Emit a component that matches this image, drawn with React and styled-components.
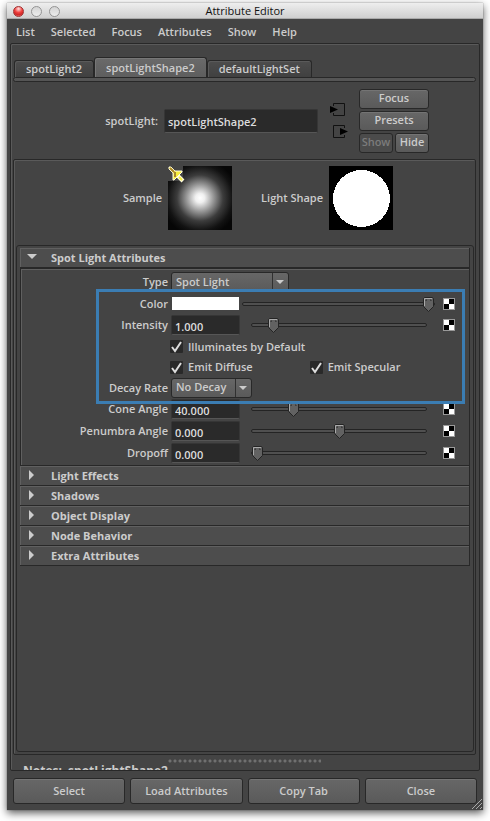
import React from "react";
import styled, { createGlobalStyle } from "styled-components";

const GlobalStyle = createGlobalStyle`
  * { box-sizing: border-box; }
  body {
    margin: 0;
    background: #fff;
    color: #ccc;
    font: 600 11px/16px "Open Sans", "Noto Sans", sans-serif;
  }
  button, input, select { font: inherit; color: inherit; margin: 0; }
  button { cursor: default; white-space: nowrap; }
`;

const svgUrl = (svg) => `url("data:image/svg+xml,${encodeURIComponent(svg)}")`;

const thumbImage = svgUrl(
  `<svg xmlns="http://www.w3.org/2000/svg" width="11" height="15"><path d="M1.5.5h8l1 1v8L5.5 14.5.5 9.500v-8z" fill="#626262" stroke="#242424"/><path d="M1.500 9V1.500H9" fill="none" stroke="#aaa"/><path d="M3 4V3h1M7 3h1v1" fill="none" stroke="#333"/></svg>`
);
const arrowImage = svgUrl(
  `<svg xmlns="http://www.w3.org/2000/svg" width="8" height="4"><path d="M0 0h8L4 4z" fill="#ccc"/></svg>`
);
const checkImage = svgUrl(
  `<svg xmlns="http://www.w3.org/2000/svg" width="13" height="13"><path d="M2 7l3 4 6-9" fill="none" stroke="#ddd" stroke-width="2"/></svg>`
);

const Page = styled.div`
  display: flex;
  min-height: 100vh;
  padding: 3px 7px 11px;
`;

const Window = styled.main`
  flex: 1;
  min-width: 0;
  display: flex;
  flex-direction: column;
  position: relative;
  background: #444;
  box-shadow: 0 3px 8px rgba(0, 0, 0, 0.65), 0 0 1px #888;
`;

const TitleBar = styled.header`
  display: grid;
  grid-template-columns: 1fr auto 1fr;
  align-items: center;
  height: 16px;
  padding: 0 6px;
  background: linear-gradient(#eee, #cfcfcf);
  border-bottom: 1px solid #aaa;
  color: #111;
  font-weight: 500;
`;

const Title = styled.h1`
  margin: 0;
  font: inherit;
`;

const Lights = styled.div`
  display: flex;
  gap: 7px;
`;

const LightButton = styled.button`
  width: 11px;
  height: 11px;
  padding: 0;
  border-radius: 50%;
  border: 1px solid ${(p) => (p.$red ? "#a03030" : "#949494")};
  background: ${(p) =>
    p.$red
      ? "radial-gradient(circle at 50% 20%, #ffd0d0 5%, #f0423f 45%, #d02828 70%, #ff8a80)"
      : "linear-gradient(#d4d4d4, #ececec)"};
`;

const MenuBar = styled.nav`
  display: flex;
  gap: 16px;
  height: 24px;
  padding: 5px 9px 0;
`;

const MenuButton = styled.button`
  padding: 0;
  height: 16px;
  border: 0;
  background: none;
`;

const OuterFrame = styled.div`
  flex: 1;
  display: flex;
  flex-direction: column;
  margin: 0 3px 0 3px;
  padding: 13px 3px 0 2px;
  border: 1px solid #282828;
  border-radius: 2px;
  box-shadow: inset 1px 1px #5a5a5a;
`;

const TabList = styled.div`
  display: flex;
  align-items: flex-end;
  padding-left: 1px;
`;

const Tab = styled.button`
  height: ${(p) => (p.$active ? 20 : 17)}px;
  padding: 0 11px;
  line-height: 16px;
  border: 1px solid #282828;
  border-bottom: 0;
  border-radius: 3px 3px 0 0;
  background: ${(p) => (p.$active ? "linear-gradient(#6a6a6a, #5e5e5e)" : "linear-gradient(#4d4d4d, #404040)")};
  box-shadow: inset 1px 1px ${(p) => (p.$active ? "#777" : "#5a5a5a")};
`;

const TabStrip = styled.div`
  height: 5px;
  border: 1px solid #282828;
  border-radius: 3px;
  background: #555;
`;

const NodeHeader = styled.section`
  display: flex;
  align-items: center;
  height: 77px;
  padding-right: 47px;
`;

const NodeName = styled.label`
  flex: 1;
  display: flex;
  align-items: center;
  justify-content: flex-end;
  gap: 6px;
  white-space: nowrap;
`;

const Field = styled.input`
  width: ${(p) => p.$width || 69}px;
  height: ${(p) => p.$height || 20}px;
  padding: 2px 3px 0;
  border: 1px solid #363636;
  border-bottom-color: #565656;
  border-radius: 2px;
  background: #2a2a2a;
  color: #ddd;
`;

const Connections = styled.div`
  display: flex;
  flex-direction: column;
  gap: 6px;
  width: 20px;
  margin: 0 10px 0 11px;
`;

const IconButton = styled.button`
  display: block;
  height: 16px;
  padding: 0;
  border: 0;
  background: none;
`;

const NodeButtons = styled.div`
  display: grid;
  grid-template-columns: 1fr 1fr;
  gap: 2px;
  width: 70px;
`;

const PushButton = styled.button`
  grid-column: ${(p) => (p.$wide ? "1 / -1" : "auto")};
  height: ${(p) => (p.$tall ? 26 : 20)}px;
  padding: 0 0 ${(p) => (p.$tall ? 0 : 1)}px;
  border: 1px solid #282828;
  border-radius: 3px;
  background: linear-gradient(#676767, #5a5a5a);
  box-shadow: inset 0 1px #747474;
  &:disabled {
    background: #4b4b4b;
    box-shadow: none;
    color: #7c7c7c;
  }
`;

const InnerFrame = styled.div`
  flex: 1;
  display: flex;
  flex-direction: column;
  padding: 0 1px 2px 2px;
  border: 1px solid #282828;
  border-radius: 2px;
  box-shadow: inset 1px 1px #5a5a5a;
`;

const Previews = styled.section`
  display: flex;
  justify-content: center;
  gap: 29px;
  height: 85px;
  padding: 6px 0 0 26px;
`;

const Preview = styled.figure`
  display: flex;
  align-items: center;
  gap: 6px;
  height: 64px;
  margin: 0;
`;

const Swatch = styled.svg`
  display: block;
  width: 64px;
  height: 64px;
`;

const AttributeFrame = styled.div`
  flex: 1;
  padding: 2px 3px;
  border: 1px solid #282828;
  border-radius: 3px;
`;

const SectionButton = styled.button`
  display: flex;
  align-items: center;
  gap: 14px;
  width: 100%;
  height: ${(p) => (p.$open ? 21 : 20)}px;
  padding: 0 0 0 ${(p) => (p.$open ? 7 : 8)}px;
  border: 0;
  border-right: 1px solid #282828;
  border-bottom: ${(p) => (p.$open ? 2 : 1)}px solid #282828;
  background: #4d4d4d;
  box-shadow: inset 1px 1px #606060;
  font-weight: 700;
  text-align: left;
`;

const SectionBody = styled.div`
  position: relative;
  display: grid;
  grid-template-rows: 22px 21px 22px 21px 20px 21px 22px 22px 22px;
  padding: 2px 14px 1px 0;
  border: solid #282828;
  border-width: 0 1px 1px;
  box-shadow: inset 1px 1px #606060;
`;

const Row = styled.div`
  display: flex;
  align-items: center;
  min-width: 0;
`;

const RowLabel = styled.label`
  flex: none;
  width: 147px;
  margin-right: 3px;
  text-align: right;
`;

const ColorWell = styled.button`
  flex: none;
  width: 67px;
  height: 13px;
  margin: 0 3px 0 1px;
  padding: 0;
  border: 0;
  background: #fff;
`;

const Slider = styled.input`
  appearance: none;
  flex: 1;
  min-width: 0;
  height: 15px;
  margin-left: ${(p) => (p.$long ? 0 : 11)}px;
  margin-right: ${(p) => (p.$long ? 8 : 16)}px;
  background: none;
  &::-webkit-slider-runnable-track {
    height: 4px;
    border: 1px solid #242424;
    border-radius: 2px;
    background: #505050;
  }
  &::-webkit-slider-thumb {
    appearance: none;
    width: 11px;
    height: 15px;
    margin-top: -6px;
    background: ${thumbImage} no-repeat;
  }
`;

const Select = styled.select`
  appearance: none;
  width: ${(p) => p.$width}px;
  height: 20px;
  padding: 0 20px 1px 4px;
  border: 1px solid #282828;
  border-radius: 3px;
  background:
    ${arrowImage} right 4px center no-repeat,
    linear-gradient(#303030, #303030) right 15px top / 1px 100% no-repeat,
    linear-gradient(#676767, #5a5a5a);
`;

const CheckLabel = styled.label`
  display: flex;
  align-items: center;
  gap: 5px;
  width: ${(p) => p.$width || "auto"};
`;

const CheckRow = styled(Row)`
  padding-left: 149px;
`;

const CheckBox = styled.input`
  appearance: none;
  width: 13px;
  height: 13px;
  border-radius: 1px;
  background: #292929;
  &:checked { background: ${checkImage} #292929; }
`;

const Highlight = styled.div`
  position: absolute;
  inset: 20px 4px 61px 75px;
  border: 3px solid #3b7db3;
  pointer-events: none;
`;

const Notes = styled.footer`
  display: flex;
  flex-direction: column;
  height: 15px;
  padding-top: 4px;
`;

const Splitter = styled.div`
  flex: none;
  align-self: center;
  width: 153px;
  height: 4px;
  background: radial-gradient(circle at 2px 2px, #707070 1px, transparent 2px) 0 0 / 5px 4px;
`;

const NotesText = styled.div`
  height: 6px;
  margin-top: 1px;
  padding-left: 10px;
  overflow: hidden;
  line-height: 13px;
  font-weight: 700;
  font-size: 12px;
  white-space: pre;
`;

const ActionBar = styled.div`
  display: grid;
  grid-template-columns: repeat(4, 1fr);
  gap: 5px;
  padding: 7px 6px 6px;
`;

const ResizeGrip = styled.svg`
  position: absolute;
  right: 1px;
  bottom: 1px;
  width: 10px;
  height: 10px;
`;

function Checker({ label }) {
  return (
    <IconButton aria-label={label}>
      <svg width="12" height="16" viewBox="0 -2 12 16" display="block">
        <path d="M0 0h12v12H0z" fill="#999" />
        <path d="M1 1h10v10H1z" fill="#fff" />
        <path d="M6 1h5v5H6zM1 6h5v5H1z" fill="#000" />
      </svg>
    </IconButton>
  );
}

function NumberRow({ id, label, value, max, position = value }) {
  return (
    <Row>
      <RowLabel htmlFor={id}>{label}</RowLabel>
      <Field id={id} defaultValue={value} />
      <Slider type="range" aria-label={label} min={-max} max={max} step="any" defaultValue={position} />
      <Checker label={`Map ${label}`} />
    </Row>
  );
}

function Check({ children, width }) {
  return (
    <CheckLabel $width={width}>
      <CheckBox type="checkbox" defaultChecked />
      {children}
    </CheckLabel>
  );
}

const menus = ["List", "Selected", "Focus", "Attributes", "Show", "Help"];
const tabs = ["spotLight2", "spotLightShape2", "defaultLightSet"];
const closedSections = ["Light Effects", "Shadows", "Object Display", "Node Behavior", "Extra Attributes"];
const actions = ["Select", "Load Attributes", "Copy Tab", "Close"];

export default function App() {
  return (
    <Page>
      <GlobalStyle />
      <Window>
        <TitleBar>
          <Lights>
            <LightButton $red aria-label="Close window" />
            <LightButton aria-label="Minimize" />
            <LightButton aria-label="Zoom" />
          </Lights>
          <Title>Attribute Editor</Title>
        </TitleBar>
        <MenuBar>
          {menus.map((m) => <MenuButton key={m}>{m}</MenuButton>)}
        </MenuBar>
        <OuterFrame>
          <TabList role="tablist">
            {tabs.map((t, i) => (
              <Tab key={t} role="tab" aria-selected={i === 1} $active={i === 1}>{t}</Tab>
            ))}
          </TabList>
          <TabStrip />
          <NodeHeader>
            <NodeName>
              spotLight:
              <Field $width={154} $height={24} defaultValue="spotLightShape2" />
            </NodeName>
            <Connections>
              <IconButton aria-label="Go to input">
                <svg width="20" height="16" display="block">
                  <path d="M4.500 4V1.500h11v12h-11V11" fill="none" stroke="#111" />
                  <path d="M1 4l8 3.500L1 11z" fill="#000" />
                </svg>
              </IconButton>
              <IconButton aria-label="Go to output">
                <svg width="20" height="16" display="block">
                  <path d="M15.500 4V1.500h-11v12h11V11" fill="none" stroke="#111" />
                  <path d="M11 4l8 3.500L11 11z" fill="#000" />
                </svg>
              </IconButton>
            </Connections>
            <NodeButtons>
              <PushButton $wide>Focus</PushButton>
              <PushButton $wide>Presets</PushButton>
              <PushButton disabled>Show</PushButton>
              <PushButton>Hide</PushButton>
            </NodeButtons>
          </NodeHeader>
          <InnerFrame>
            <Previews>
              <Preview>
                <figcaption>Sample</figcaption>
                <Swatch viewBox="0 0 64 64">
                  <defs>
                    <radialGradient id="glow" cx="50%" cy="50%" r="60%">
                      <stop offset="0" stopColor="#fff" />
                      <stop offset=".12" stopColor="#f0f0f0" />
                      <stop offset=".35" stopColor="#989898" />
                      <stop offset=".6" stopColor="#3c3c3c" />
                      <stop offset=".85" stopColor="#121212" />
                      <stop offset="1" stopColor="#060606" />
                    </radialGradient>
                  </defs>
                  <path d="M0 0h64v64H0z" fill="url(#glow)" />
                  <path d="M0 0h15v15H0z" fill="#444" />
                  <path d="M1 1h2l4 4h7v1l-8 8H5V7L1 3z" fill="#f6ee3c" stroke="#fffce0" />
                  <path d="M2 2l4 4M7 6v5" fill="none" stroke="#a8862c" strokeWidth="2" />
                  <path d="M10 10l5 5" stroke="#fffce0" strokeWidth="4" />
                  <path d="M11 11l3 3" stroke="#f6ee3c" strokeWidth="2" />
                </Swatch>
              </Preview>
              <Preview>
                <figcaption>Light Shape</figcaption>
                <Swatch viewBox="0 0 64 64" shapeRendering="crispEdges">
                  <path d="M0 0h64v64H0z" fill="#000" />
                  <circle cx="32.500" cy="32.500" r="28.500" fill="#fff" />
                </Swatch>
              </Preview>
            </Previews>
            <AttributeFrame>
              <SectionButton $open aria-expanded="true">
                <svg width="10" height="10"><path d="M0 1h10L5 6z" fill="#ccc" /></svg>
                Spot Light Attributes
              </SectionButton>
              <SectionBody>
                <Row>
                  <RowLabel htmlFor="type">Type</RowLabel>
                  <Select id="type" $width={118}><option>Spot Light</option></Select>
                </Row>
                <Row>
                  <RowLabel htmlFor="color">Color</RowLabel>
                  <ColorWell id="color" />
                  <Slider $long type="range" aria-label="Color value" min="0" max="1" step="any" defaultValue="1" />
                  <Checker label="Map Color" />
                </Row>
                <NumberRow id="intensity" label="Intensity" value="1.000" max="10" position="-8" />
                <CheckRow><Check>Illuminates by Default</Check></CheckRow>
                <CheckRow>
                  <Check width="49%">Emit Diffuse</Check>
                  <Check>Emit Specular</Check>
                </CheckRow>
                <Row>
                  <RowLabel htmlFor="decay">Decay Rate</RowLabel>
                  <Select id="decay" $width={81}><option>No Decay</option></Select>
                </Row>
                <NumberRow id="cone" label="Cone Angle" value="40.000" max="180" position="-100" />
                <NumberRow id="penumbra" label="Penumbra Angle" value="0.000" max="10" />
                <NumberRow id="dropoff" label="Dropoff" value="0.000" max="255" position="-255" />
                <Highlight />
              </SectionBody>
              {closedSections.map((s) => (
                <SectionButton key={s} aria-expanded="false">
                  <svg width="9" height="14"><path d="M1 1v10l5-5z" fill="#ccc" /></svg>
                  {s}
                </SectionButton>
              ))}
            </AttributeFrame>
          </InnerFrame>
          <Notes>
            <Splitter />
            <NotesText>{"Notes:  spotLightShape2"}</NotesText>
          </Notes>
        </OuterFrame>
        <ActionBar>
          {actions.map((a) => <PushButton key={a} $tall>{a}</PushButton>)}
        </ActionBar>
        <ResizeGrip>
          <path d="M0 10L10 0M4 10l6-6M8 10l2-2" stroke="#aaa" />
        </ResizeGrip>
      </Window>
    </Page>
  );
}
